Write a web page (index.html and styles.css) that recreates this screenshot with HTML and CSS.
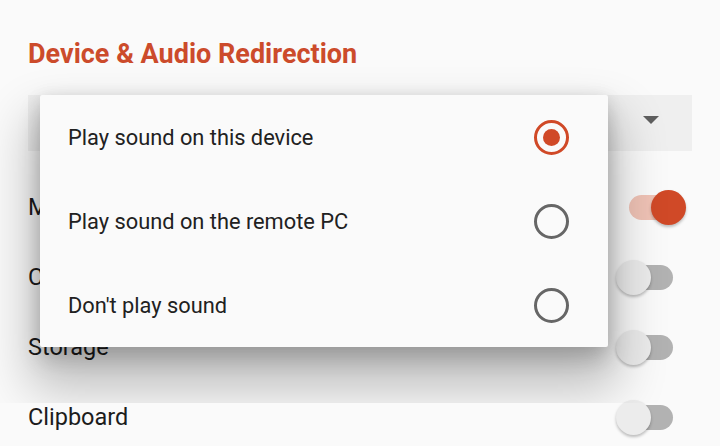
FILE: index.html
```html
<!DOCTYPE html>
<html>
<head>
<meta charset="utf-8">
<link rel="stylesheet" href="styles.css">
</head>
<body>
<div class="screen">
  <h1 class="title">Device &amp; Audio Redirection</h1>
  <div class="spinner">
    <span class="arrow"></span>
  </div>
  <div class="list">
    <div class="row"><span class="label">Microphone</span><span class="switch on"><span class="track"></span><span class="thumb"></span></span></div>
    <div class="row"><span class="label">Camera</span><span class="switch"><span class="track"></span><span class="thumb"></span></span></div>
    <div class="row"><span class="label">Storage</span><span class="switch"><span class="track"></span><span class="thumb"></span></span></div>
    <div class="row"><span class="label">Clipboard</span><span class="switch"><span class="track"></span><span class="thumb"></span></span></div>
  </div>

  <div class="popup">
    <div class="option"><span class="opt-text">Play sound on this device</span><span class="radio checked"></span></div>
    <div class="option"><span class="opt-text">Play sound on the remote PC</span><span class="radio"></span></div>
    <div class="option"><span class="opt-text">Don't play sound</span><span class="radio"></span></div>
  </div>
</div>
</body>
</html>
```

FILE: styles.css
```css
html, body {
  margin: 0;
  padding: 0;
  background: #fafafa;
}
body {
  font-family: Roboto, "Noto Sans", sans-serif;
  color: #1c1c1c;
  width: 720px;
  height: 446px;
  overflow: hidden;
}
.screen {
  position: relative;
  padding: 0 28px;
}
.title {
  margin: 0;
  padding-top: 38px;
  height: 95px;
  box-sizing: border-box;
  font-size: 27px;
  line-height: 32px;
  font-weight: 700;
  color: #cc4b2b;
}
.spinner {
  height: 56px;
  background: #efefef;
  display: flex;
  align-items: center;
  justify-content: flex-end;
  padding-right: 33px;
}
.arrow {
  width: 0;
  height: 0;
  border-left: 8px solid transparent;
  border-right: 8px solid transparent;
  border-top: 8px solid #5f5f5f;
  margin-top: -6px;
}
.list {
  padding-top: 21px;
}
.row {
  height: 70px;
  display: flex;
  align-items: center;
  justify-content: space-between;
}
.label {
  font-size: 23.5px;
}
.switch {
  position: relative;
  width: 70px;
  height: 35px;
  margin-right: 6px;
}
.track {
  position: absolute;
  left: 13px;
  top: 5px;
  width: 44px;
  height: 25px;
  border-radius: 13px;
  background: #b2b2b2;
}
.thumb {
  position: absolute;
  left: 0;
  top: 0;
  width: 35px;
  height: 35px;
  border-radius: 50%;
  background: #ececec;
  box-shadow: 0 2px 3px rgba(0,0,0,0.25);
}
.switch.on .track {
  background: #f0c3b6;
}
.switch.on .thumb {
  left: 35px;
  background: #d04927;
}
.popup {
  position: absolute;
  left: 40px;
  top: 95px;
  width: 568px;
  background: #fafafa;
  border-radius: 2px;
  box-shadow: 0 32px 50px 10px rgba(0,0,0,0.24), 0 12px 22px rgba(0,0,0,0.18), 0 0 16px rgba(0,0,0,0.07);
  clip-path: inset(-80px -80px -56px -80px);
}
.option {
  height: 84px;
  display: flex;
  align-items: center;
  justify-content: space-between;
  padding: 0 39px 0 28px;
}
.opt-text {
  font-size: 21.8px;
  color: #212121;
}
.radio {
  width: 35px;
  height: 35px;
  box-sizing: border-box;
  border: 3.5px solid #666666;
  border-radius: 50%;
  position: relative;
}
.radio.checked {
  border-color: #d04927;
}
.radio.checked::after {
  content: "";
  position: absolute;
  left: 50%;
  top: 50%;
  width: 17px;
  height: 17px;
  margin: -8.5px 0 0 -8.5px;
  border-radius: 50%;
  background: #d04927;
}
```
